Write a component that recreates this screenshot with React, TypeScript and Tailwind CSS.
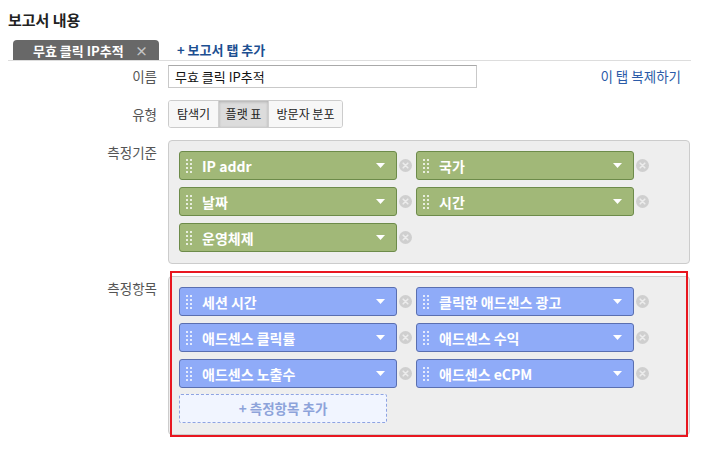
import React from "react";

const FONT = {
  fontFamily: '"Noto Sans CJK KR", "Noto Sans", "Liberation Sans", sans-serif',
};

function Grip() {
  return (
    <svg width="6" height="14" viewBox="0 0 6 14" className="ml-[6px] shrink-0">
      {[0, 4, 8, 12].map((y) =>
        [0, 4].map((x) => (
          <rect key={`${x}-${y}`} x={x} y={y} width="2" height="2" fill="#ffffff" opacity="0.75" />
        ))
      )}
    </svg>
  );
}

function Caret() {
  return (
    <svg width="9" height="5" viewBox="0 0 9 5" className="ml-auto mr-[11px] shrink-0">
      <path d="M0 0 H9 L4.5 5 Z" fill="#ffffff" />
    </svg>
  );
}

function RemoveIcon() {
  return (
    <svg width="13" height="13" viewBox="0 0 13 13" className="ml-[2px] shrink-0">
      <circle cx="6.5" cy="6.5" r="6.5" fill="#cfcfcf" />
      <path d="M4.2 4.2 L8.8 8.8 M8.8 4.2 L4.2 8.8" stroke="#ececec" strokeWidth="1.6" strokeLinecap="round" />
    </svg>
  );
}

function Pill({ label, kind }: { label: string; kind: "dim" | "metric" }) {
  return (
    <div className="flex w-[237px] items-center">
      <div
        className={
          kind === "dim"
            ? "flex h-[29px] w-[218px] items-center rounded-[3px] border border-[#6d8b4a] bg-[#a1b878]"
            : "flex h-[29px] w-[218px] items-center rounded-[3px] border border-[#5a6fb0] bg-[#8fabf8]"
        }
      >
        <Grip />
        <span className="ml-[10px] text-[14px] font-bold leading-none text-white">{label}</span>
        <Caret />
      </div>
      <RemoveIcon />
    </div>
  );
}

export default function App() {
  return (
    <div className="relative h-[455px] w-[703px] overflow-hidden bg-white text-[#222]" style={FONT}>
      {/* Title */}
      <h2 className="pl-[8px] pt-[10px] text-[15px] font-bold leading-[20px] text-[#222]">보고서 내용</h2>

      {/* Tabs */}
      <div className="ml-[8px] mr-[12px] mt-[10px] flex items-end border-b border-[#dddddd]">
        <div className="ml-[5px] flex h-[20px] w-[146px] items-center rounded-t-[4px] bg-[#686868] pl-[20px]">
          <span className="text-[13px] font-bold leading-none text-white">무효 클릭 IP추적</span>
          <span className="ml-auto mr-[11px] text-[13px] font-bold leading-none text-[#c4c4c4]">×</span>
        </div>
        <button className="mb-[4px] ml-[18px] text-[13px] font-bold leading-none text-[#1d4f91]">+ 보고서 탭 추가</button>
      </div>

      {/* Name */}
      <div className="mt-[4px] flex items-center">
        <div className="w-[157px] text-right text-[13.5px] text-[#555]">이름</div>
        <div className="ml-[11px] flex h-[23px] w-[309px] items-center border border-[#c9c9c9] border-t-[#a9a9a9] pl-[6px] text-[13px] text-[#111]">
          무효 클릭 IP추적
        </div>
        <a className="ml-auto mr-[22px] text-[13.5px] text-[#2b5ba8]">이 탭 복제하기</a>
      </div>

      {/* Type */}
      <div className="mt-[12px] flex items-center">
        <div className="w-[157px] text-right text-[13.5px] text-[#555]">유형</div>
        <div className="ml-[11px] flex h-[28px] overflow-hidden rounded-[3px] border border-[#cccccc] text-[12px] text-[#222]">
          <div className="flex w-[49px] items-center justify-center bg-[#f7f7f7]">탐색기</div>
          <div className="flex w-[51px] items-center justify-center border-x border-[#d0d0d0] bg-[#dcdcdc] shadow-[inset_0_1px_3px_rgba(0,0,0,0.2)]">
            플랫 표
          </div>
          <div className="flex w-[73px] items-center justify-center bg-[#f7f7f7]">방문자 분포</div>
        </div>
      </div>

      {/* Dimensions */}
      <div className="mt-[12px] flex items-start">
        <div className="w-[157px] pt-[2px] text-right text-[13.5px] text-[#555]">측정기준</div>
        <div className="ml-[11px] w-[522px] rounded-[4px] border border-[#cccccc] bg-[#eeeeee] pb-[11px] pl-[10px] pt-[10px]">
          <div className="grid grid-cols-[237px_237px] gap-y-[7px]">
            <Pill kind="dim" label="IP addr" />
            <Pill kind="dim" label="국가" />
            <Pill kind="dim" label="날짜" />
            <Pill kind="dim" label="시간" />
            <Pill kind="dim" label="운영체제" />
          </div>
        </div>
      </div>

      {/* Metrics */}
      <div className="mt-[12px] flex items-start">
        <div className="w-[157px] pt-[2px] text-right text-[13.5px] text-[#555]">측정항목</div>
        <div className="relative ml-[11px] w-[522px] rounded-[4px] border border-[#cccccc] bg-[#eeeeee] pb-[11px] pl-[10px] pt-[10px]">
          <div className="grid grid-cols-[237px_237px] gap-y-[7px]">
            <Pill kind="metric" label="세션 시간" />
            <Pill kind="metric" label="클릭한 애드센스 광고" />
            <Pill kind="metric" label="애드센스 클릭률" />
            <Pill kind="metric" label="애드센스 수익" />
            <Pill kind="metric" label="애드센스 노출수" />
            <Pill kind="metric" label="애드센스 eCPM" />
          </div>
          <button className="mt-[6px] flex h-[29px] w-[208px] items-center justify-center rounded-[2px] border border-dashed border-[#8ea3e2] bg-[#f1f5ff] text-[13.5px] font-bold text-[#8da3da]">
            + 측정항목 추가
          </button>
          {/* annotation box */}
          <div className="pointer-events-none absolute -bottom-[3px] -top-[6px] left-[1px] right-[1px] border-2 border-[#e8161f]" />
        </div>
      </div>
    </div>
  );
}
